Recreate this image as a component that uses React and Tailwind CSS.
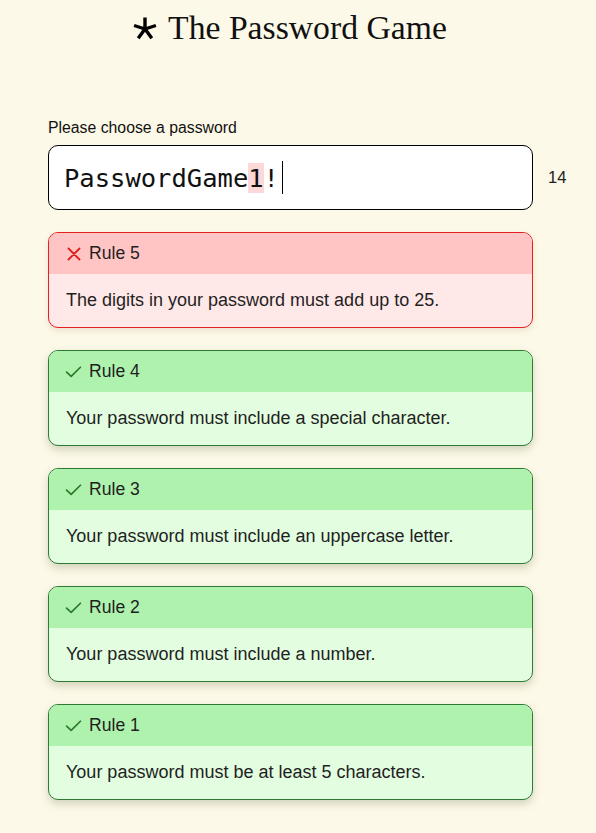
import React from "react";

function Check() {
  return (
    <svg width="17" height="17" viewBox="0 0 16 16" fill="none" stroke="#2c7a31" strokeWidth="1.6" strokeLinecap="round" strokeLinejoin="round">
      <path d="M1.5 8.5 L5.8 12.5 L14.5 4" />
    </svg>
  );
}

function Cross() {
  return (
    <svg width="16" height="16" viewBox="0 0 16 16" fill="none" stroke="#e01b1b" strokeWidth="1.8" strokeLinecap="round">
      <path d="M2.5 2.5 L13.5 13.5 M13.5 2.5 L2.5 13.5" />
    </svg>
  );
}

function Star() {
  return (
    <svg width="24" height="24" viewBox="-12 -12 24 24" fill="none" stroke="#000" strokeWidth="3.4" strokeLinecap="butt">
      <path d="M0 0 L0 -11.5 M0 0 L10.9 -3.5 M0 0 L6.8 9.3 M0 0 L-6.8 9.3 M0 0 L-10.9 -3.5" />
    </svg>
  );
}

function Rule({ n, text, ok }) {
  return (
    <div
      className={
        ok
          ? "rounded-[10px] border border-[#2f7a35] bg-[#e2fde0] overflow-hidden shadow-[0_4px_8px_rgba(60,80,30,0.22)]"
          : "rounded-[10px] border border-[#e52020] bg-[#ffe8e8] overflow-hidden shadow-[0_3px_6px_rgba(120,60,30,0.12)]"
      }
    >
      <div className={ok ? "h-[41px] bg-[#aef2ad] flex items-center pl-[16px] gap-[7px]" : "h-[41px] bg-[#ffc5c5] flex items-center pl-[17px] gap-[7px]"}>
        {ok ? <Check /> : <Cross />}
        <span className="text-[17.6px] text-[#1f1f1f]">Rule {n}</span>
      </div>
      <div className="h-[53px] flex items-center pl-[17px] text-[18px] text-[#1f1f1f]">{text}</div>
    </div>
  );
}

export default function App() {
  return (
    <div className="min-h-[833px] bg-[#fdf9e8] font-['Liberation_Sans',Arial,sans-serif]">
      <div className="flex justify-center items-center pt-[8px] gap-[11px] pr-[16px]">
        <span className="translate-y-[1px]"><Star /></span>
        <h1 className="font-['Liberation_Serif',serif] font-normal text-[33.7px] text-[#111] leading-[40px]">The Password Game</h1>
      </div>
      <div className="pl-[48px] pt-[71px]">
        <div className="text-[15.8px] text-[#111] leading-[18px]">Please choose a password</div>
        <div className="flex items-center mt-[8px]">
          <div className="w-[485px] h-[65px] rounded-[10px] border border-black bg-white flex items-center pl-[15px]">
            <span className="font-['DejaVu_Sans_Mono',monospace] text-[25.5px] text-[#111] leading-[32px]">
              PasswordGame<span className="bg-[#fdd8d8]">1</span>!
            </span>
            <span className="w-px h-[33px] bg-black ml-[3px]"></span>
          </div>
          <span className="ml-[15px] text-[16.5px] text-[#222]">14</span>
        </div>
        <div className="w-[485px] flex flex-col gap-[22px] mt-[22px]">
          <Rule n={5} ok={false} text="The digits in your password must add up to 25." />
          <Rule n={4} ok text="Your password must include a special character." />
          <Rule n={3} ok text="Your password must include an uppercase letter." />
          <Rule n={2} ok text="Your password must include a number." />
          <Rule n={1} ok text="Your password must be at least 5 characters." />
        </div>
      </div>
    </div>
  );
}
